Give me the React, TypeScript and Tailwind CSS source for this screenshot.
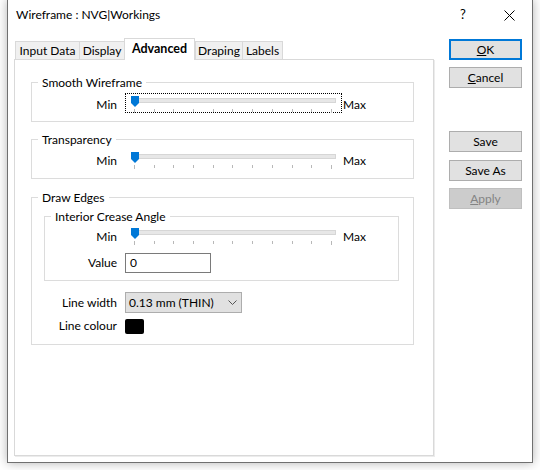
const font = { fontFamily: 'Lato, "Noto Sans", sans-serif' };

function Slider({ focus }: { focus?: boolean }) {
  return (
    <div
      className={`relative w-[217px] h-[20px] border border-dotted ${focus ? 'border-black' : 'border-transparent'}`}
    >
      {/* track */}
      <div className="absolute left-[8px] top-[4px] w-[202px] h-[5px] bg-[#e7e7e7] border border-[#d6d6d6]" />
      {/* thumb */}
      <svg className="absolute left-[5px] top-[2px]" width="8" height="11" viewBox="0 0 8 11">
        <path d="M0 0 H8 V7 L4 11 L0 7 Z" fill="#0078d7" />
      </svg>
      {/* ticks */}
      <div className="absolute left-[8px] top-[15px] w-[198px] flex justify-between items-start">
        {Array.from({ length: 11 }).map((_, i) => (
          <div key={i} className={`w-px bg-[#b8b8b8] ${i === 0 || i === 10 ? 'h-[4px]' : 'h-[3px]'}`} />
        ))}
      </div>
    </div>
  );
}

function SliderRow({ labelW, focus }: { labelW: string; focus?: boolean }) {
  return (
    <div className="h-[20px] flex items-center">
      <div className={`${labelW} text-right leading-[16px] translate-y-[2px]`}>Min</div>
      <div className="ml-[8px]">
        <Slider focus={focus} />
      </div>
      <div className="ml-[1px] leading-[16px] translate-y-[2px]">Max</div>
    </div>
  );
}

function Group({ title, className, children }: { title: string; className: string; children?: React.ReactNode }) {
  return (
    <div className={`relative border border-[#dcdcdc] ${className}`}>
      <span className="absolute left-[6px] top-[-8px] bg-white px-[4px] leading-[16px]">{title}</span>
      {children}
    </div>
  );
}

function Btn({ children, kind }: { children: React.ReactNode; kind?: 'default' | 'disabled' }) {
  const cls =
    kind === 'default'
      ? 'border-2 border-[#0078d7] bg-[#e1e1e1] text-black'
      : kind === 'disabled'
        ? 'border border-[#bfbfbf] bg-[#cccccc] text-[#838383]'
        : 'border border-[#adadad] bg-[#e1e1e1] text-black';
  return (
    <div className={`w-[73px] h-[21px] flex items-center justify-center leading-none ${cls}`}>{children}</div>
  );
}

export default function App() {
  const tabs = [
    { label: 'Input Data', w: 'w-[64px]' },
    { label: 'Display', w: 'w-[45px]' },
    { label: 'Advanced', w: 'w-[71px]', active: true },
    { label: 'Draping', w: 'w-[47px]' },
    { label: 'Labels', w: 'w-[41px]', last: true },
  ];

  return (
    <div className="w-[540px] h-[470px] bg-white overflow-hidden pl-[7px] text-[12px] text-black" style={font}>
      <div className="-mt-px w-[526px] h-[464px] bg-white border border-[#707070] shadow-[0_0_10px_rgba(0,0,0,0.3)] flex flex-col">
        {/* Title bar */}
        <div className="h-[38px] flex items-start">
          <div className="pl-[8px] pt-[7px] leading-[16px] flex-1">Wireframe : NVG|Workings</div>
          <div className="w-[46px] h-[30px] flex items-center justify-center text-[13px]">?</div>
          <div className="w-[46px] h-[30px] flex items-center justify-center">
            <svg width="11" height="11" viewBox="0 0 11 11">
              <path d="M0.5 0.5 L10.5 10.5 M10.5 0.5 L0.5 10.5" stroke="#000" strokeWidth="1" />
            </svg>
          </div>
        </div>

        <div className="flex">
          {/* Left: tabs and panel */}
          <div className="ml-[6px] w-[420px] flex flex-col">
            <div className="h-[21px] flex items-end pl-px">
              {tabs.map((t) =>
                t.active ? (
                  <div
                    key={t.label}
                    className={`${t.w} h-[22px] -mb-px relative bg-white border-t border-l border-r border-[#d9d9d9] flex items-center justify-center font-bold text-[12.5px]`}
                  >
                    {t.label}
                  </div>
                ) : (
                  <div
                    key={t.label}
                    className={`${t.w} h-[18px] bg-[#f0f0f0] border-t border-l border-[#d9d9d9] flex items-center justify-center ${t.last ? 'border-r' : ''}`}
                  >
                    {t.label}
                  </div>
                ),
              )}
            </div>

            <div className="h-[397px] border border-[#d9d9d9] shadow-[1px_1px_0_#ececec] pl-[16px] pt-[22px]">
              <Group title="Smooth Wireframe" className="w-[383px] h-[40px] pt-[10px]">
                <SliderRow labelW="w-[85px]" focus />
              </Group>

              <Group title="Transparency" className="mt-[17px] w-[383px] h-[40px] pt-[9px]">
                <SliderRow labelW="w-[85px]" />
              </Group>

              <Group title="Draw Edges" className="mt-[18px] w-[383px] h-[148px] pt-[18px] px-[12px]">
                <Group title="Interior Crease Angle" className="w-[355px] h-[65px] pt-[8px]">
                  <SliderRow labelW="w-[72px]" />
                  <div className="mt-[8px] flex items-center">
                    <div className="w-[72px] text-right">Value</div>
                    <div className="ml-[8px] w-[86px] h-[20px] border border-[#7a7a7a] flex items-center pl-[4px]">0</div>
                  </div>
                </Group>

                <div className="mt-[11px] flex items-center">
                  <div className="w-[73px] text-right">Line width</div>
                  <div className="ml-[8px] w-[117px] h-[21px] bg-[#e1e1e1] border border-[#adadad] flex items-center justify-between pl-[3px] pr-[4px]">
                    <span>0.13 mm (THIN)</span>
                    <svg width="9" height="5" viewBox="0 0 9 5">
                      <path d="M0.5 0.5 L4.5 4.5 L8.5 0.5" stroke="#555" strokeWidth="1" fill="none" />
                    </svg>
                  </div>
                </div>

                <div className="mt-[3px] h-[20px] flex items-center">
                  <div className="w-[73px] text-right">Line colour</div>
                  <div className="ml-[8px] w-[19px] h-[15px] bg-black rounded-[2px]" />
                </div>
              </Group>
            </div>
          </div>

          {/* Right: buttons */}
          <div className="ml-[15px] pt-px flex flex-col">
            <Btn kind="default">
              <span><u>O</u>K</span>
            </Btn>
            <div className="mt-[7px]">
              <Btn>
                <span><u>C</u>ancel</span>
              </Btn>
            </div>
            <div className="mt-[43px]">
              <Btn>Save</Btn>
            </div>
            <div className="mt-[8px]">
              <Btn>Save As</Btn>
            </div>
            <div className="mt-[7px]">
              <Btn kind="disabled">
                <span><u>A</u>pply</span>
              </Btn>
            </div>
          </div>
        </div>
      </div>
    </div>
  );
}
